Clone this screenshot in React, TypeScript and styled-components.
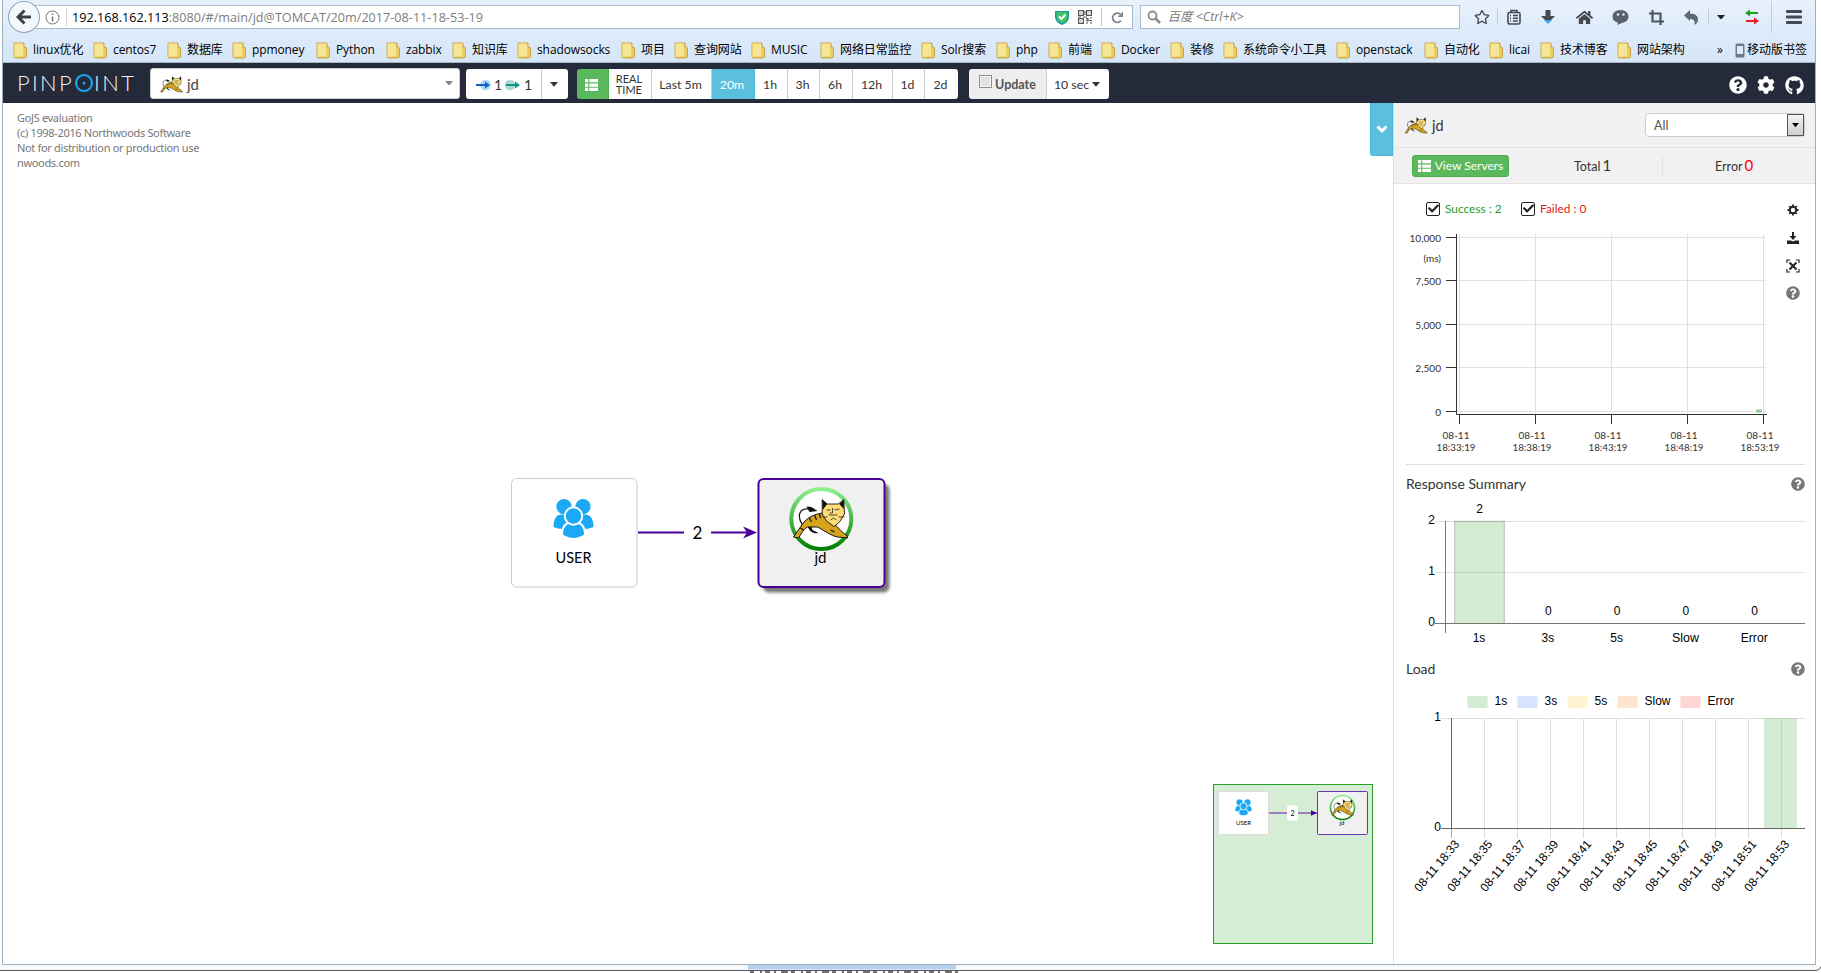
import React from "react";
import styled, { createGlobalStyle, css } from "styled-components";
import { FaQuestionCircle, FaCog, FaGithub, FaHome, FaRegStar, FaCheck } from "react-icons/fa";

const ui = `"Open Sans", "Noto Sans", "Noto Sans CJK SC", sans-serif`;
const lato = `Lato, "Liberation Sans", sans-serif`;
const arial = `"Liberation Sans", Arial, sans-serif`;

const Global = createGlobalStyle`
  * { box-sizing: border-box; }
  body { margin: 0; background: #fff; font-family: ${lato}; overflow: hidden; }
  svg { display: block; flex: none; }
`;

const Desktop = styled.div`
  width: 1821px; height: 973px; padding-left: 2px; background: #fff; overflow: hidden;
  display: flex; flex-direction: column;
`;
const Frame = styled.div`
  width: 1814px; height: 965px; display: flex; flex-direction: column; flex: none;
  border: solid #9eb0be; border-width: 0 1px 1px 1px;
`;
const Chrome = styled.header`
  height: 63px; flex: none; border-bottom: 1px solid #a3b6c8;
  background: linear-gradient(#e8f2fc, #dceafa 55%, #d7e7f7);
`;
const AddressRow = styled.div`height: 34px; display: flex; align-items: center;`;
const BackButton = styled.div`
  width: 32px; height: 32px; margin-left: 5px; border-radius: 50%; border: 1px solid #8fa4b9; background: #f3f8fd;
  display: flex; align-items: center; justify-content: center; z-index: 1;
`;
const Field = styled.div<{ $w: number }>`
  width: ${p => p.$w}px; height: 24px; border: 1px solid #a8b9cb; background: #fff; display: flex; align-items: center;
  font: 12.65px/22px ${ui}; color: #7d7d7d;
`;
const UrlField = styled(Field)`margin-left: -6px; padding-left: 10px;`;
const UrlText = styled.span`padding: 0 0 0 5px; white-space: nowrap; b { font-weight: 400; color: #000; }`;
const SearchField = styled(Field)`margin-left: 7px; padding-left: 6px; gap: 6px; font-style: italic; font-size: 12.5px;`;
const Sep = styled.i<{ $h?: number }>`width: 1px; height: ${p => p.$h ?? 16}px; background: #c2cbd6; flex: none;`;
const FieldSep = styled(Sep)`background: #d5d5d5; margin-left: 6px;`;
const Tool = styled.span<{ $w: number }>`width: ${p => p.$w}px; display: flex; justify-content: center; color: #454a50;`;
const UrlIcons = styled.div`margin-left: auto; display: flex; align-items: center; gap: 9px; padding-right: 8px; flex: none;`;
const Tools = styled.div`display: flex; align-items: center; margin-left: 6px;`;
const Bookmarks = styled.div`height: 28px; display: flex; align-items: center; padding: 4px 0 0 10px; font: 12px/20px ${ui}; color: #000;`;
const Bookmark = styled.div<{ $w: number }>`
  width: ${p => p.$w}px; flex: none; display: flex; gap: 6px; align-items: center; white-space: nowrap; letter-spacing: -0.1px;
`;
const Mobile = styled.div`display: flex; gap: 2px; align-items: center; white-space: nowrap;`;

const NavBar = styled.nav`height: 40px; flex: none; background: #242a3a; display: flex; align-items: center; color: #fff;`;
const Logo = styled.div`
  width: 147px; padding-left: 14px; display: flex; align-items: center; font: 300 22px/40px ${lato}; color: #f2f3f5; white-space: nowrap;
`;
const LogoPart = styled.span<{ $w: number; $ls: number }>`
  width: ${p => p.$w}px; letter-spacing: ${p => p.$ls}px; display: block; flex: none;
`;
const AppSelect = styled.div`
  width: 310px; height: 31px; border-radius: 3px; background: #fff; border: 1px solid #ccc; display: flex; align-items: center;
  padding: 1px 6px 0 9px; gap: 4px; font-size: 15px; color: #444; margin: 1px 6px 0 0;
  svg:last-child { margin: -2px 0 0 auto; }
`;
const Group = styled.div<{ $gap: number }>`height: 30px; display: flex; margin: 1px ${p => p.$gap}px 0 0; border-radius: 3px; overflow: hidden;`;
const Cell = styled.div<{ $w: number; $tone?: "green" | "blue" | "gray" }>`
  width: ${p => p.$w}px; height: 30px; background: #fff; color: #333; border-right: 1px solid #ccc; font-size: 12.3px; line-height: 12px;
  display: flex; align-items: center; justify-content: center; white-space: nowrap; gap: 3px; padding: 2px 2px 0 0;
  &:last-child { border-right: 0; }
  ${p => p.$tone === "green" && css`background: #5cb85c; border-color: #4cae4c;`}
  ${p => p.$tone === "blue" && css`background: #5bc0de; border-color: #46b8da; color: #fff;`}
  ${p => p.$tone === "gray" && css`background: #eee; color: #555; font-weight: 700; font-size: 12.5px; padding-right: 0;`}
`;
const FlowCell = styled(Cell)`font-size: 14px; padding-right: 0;`;
const RealTime = styled(Cell)`font-size: 11px; line-height: 11px; padding: 0 2px 0 0;`;
const NativeCheck = styled.i`width: 13px; height: 13px; border: 1px solid #8e8f8f; background: #dfe1e3; box-shadow: inset 0 0 0 1px #f6f6f6; margin-top: -6px;`;
const NavIcons = styled.div`margin-left: auto; display: flex; align-items: center; gap: 10px; padding: 4px 11px 0 0;`;

const Body = styled.main`flex: 1; display: flex; min-height: 0; background: #fff;`;
const Canvas = styled.section`width: 1390px; position: relative; overflow: hidden;`;
const Notice = styled.p`margin: 7px 0 0 14px; font: 11px/15px "Noto Sans", sans-serif; color: #777; letter-spacing: -0.33px;`;
const Layer = styled.svg`position: absolute; left: 0; top: 0;`;
const Toggle = styled.button`
  position: absolute; right: 0; top: 0; width: 23px; height: 53px; border: 1px solid #46b8da; border-top: 0; background: #5bc0de;
  border-radius: 0 0 0 3px; display: flex; align-items: center; justify-content: center; padding: 0;
`;
const Side = styled.aside`width: 422px; border-left: 1px solid #ddd; color: #333; display: flex; flex-direction: column;`;
const SideHead = styled.div`height: 45px; background: #f1f1f1; border-bottom: 1px solid #e3e3e3; display: flex; align-items: center; padding: 0 10px 0 10px; gap: 4px; font-size: 14.500px;`;
const Select = styled.div`
  margin: 0 0 0 auto; width: 160px; height: 24px; background: #fff; border: 1px solid #ccc; border-radius: 4px; display: flex; align-items: center;
  justify-content: space-between; font-size: 12.5px; padding-left: 8px; color: #555;
`;
const SelectArrow = styled.i`width: 17px; height: 22px; border: 1px solid #555; background: linear-gradient(#f3f3f3, #cfcfcf); display: flex; align-items: center; justify-content: center;`;
const Stats = styled.div`height: 36px; background: #f1f1f1; border-bottom: 1px solid #e3e3e3; display: flex; align-items: center; padding-left: 18px; font-size: 12.5px;`;
const ViewServers = styled.button`
  width: 97px; height: 22px; padding: 0; border: 1px solid #4cae4c; border-radius: 3px; background: #5cb85c; color: #fff; font: 12px ${lato};
  display: flex; align-items: center; justify-content: center; gap: 4px; white-space: nowrap; margin-right: 65px;
`;
const Stat = styled.div<{ $w: number; $red?: boolean }>`
  width: ${p => p.$w}px; display: flex; align-items: baseline; gap: 2px;
  b { font-weight: 400; font-size: 15px; line-height: 16px; color: ${p => (p.$red ? "#f00" : "#333")}; }
`;
const StatSep = styled.i`width: 1px; height: 20px; background: #e2e2e2; margin-right: 52px;`;
const Scatter = styled.div`height: 280px; display: flex;`;
const Legend = styled.div`height: 15px; display: flex; margin: 17px 0 0 32px; font-size: 11.9px; line-height: 15px;`;
const Check = styled.label<{ $c: string; $w: number }>`width: ${p => p.$w}px; display: flex; align-items: center; gap: 5px; color: ${p => p.$c}; white-space: nowrap;`;
const Box = styled.i`width: 14px; height: 14px; border: 1px solid #222; border-radius: 2px; color: #222; display: flex; align-items: center; justify-content: center;`;
const ScatterMain = styled.div`width: 388px; > svg { margin-top: 12px; }`;
const Actions = styled.div`width: 22px; display: flex; flex-direction: column; align-items: center; gap: 14px; padding-top: 19px; color: #222; svg:last-child { margin-top: -1px; }`;
const Section = styled.section`margin: 0 10px 0 12px; &:first-of-type { border-top: 1px solid #ddd; }`;
const Title = styled.h3`
  margin: 0; height: 36px; display: flex; align-items: center; justify-content: space-between; font: 400 14px/20px ${lato}; padding-top: 2px; color: #333;
  svg { color: #777; }
`;
const LoadTitle = styled(Title)`padding: 0;`;

const BottomEdge = styled.footer`height: 8px; flex: none; background: #fff; margin-left: -2px;`;

const Cat = ({ x, y, w, h }: { x?: number; y?: number; w: number; h: number }) => (
  <svg x={x} y={y} width={w} height={h} viewBox="3 11 56 42">
    <path d="M13 38C7 29 10 21 19 22" fill="none" stroke="#111" strokeWidth="1.2" />
    <path d="M17 19.500l5 .5 6 4-8 1z" fill="#111" />
    <path d="M18 39c2 6 6 8 11 7l-6-3-2-6z" fill="#111" />
    <path d="M33 26c-8 1-16 5-20 11l-9 13 5 1c4-6 5-9 9-11l10 0c6 3 14 9 20 10l10 1-1-3c-6-3-8-9-15-12z" fill="#d6a41c" stroke="#111" strokeWidth="1" />
    <path d="M20 31l2 4M25 28l2 5M30 27l1 4M41 43l4 2M11 41l3 2" stroke="#111" strokeWidth="1.2" />
    <path d="M32.700 12.700l5 4.300h11l5.600-4.300L55 27l-5 8-5.500 4.500-7.500-5.500-4.300-7z" fill="#fddc76" stroke="#111" strokeWidth=".9" />
    <path d="M32.700 12.700l5 4.300-4.500 6zM54.300 12.700l-4.500 4.300 4.500 5z" fill="#111" />
    <path d="M37 23h4M45 23l5-1M43 21v5h-3M39 28h9M41 33l3-2 3 2M33 30h5M49 30h6" stroke="#222" strokeWidth=".8" fill="none" />
  </svg>
);
const Users = ({ x, y, w, bg = "#fff" }: { x: number; y: number; w: number; bg?: string }) => (
  <svg x={x} y={y} width={w} height={w} viewBox="-.5 -.5 41 41">
    <g fill="#1ba9f5">
      <circle cx="10.5" cy="7.6" r="7.6" /><circle cx="29.5" cy="7.6" r="7.6" />
      <path d="M0 28q0-13 9-12.500q9 0 9 12.500q-9 4-18 0zM22 28q0-13 9-12.500q9 0 9 12.500q-9 4-18 0z" />
      <path d="M8.500 36q0-13 11.500-13t11.500 13q-11.500 8-23 0z" stroke={bg} strokeWidth="2" />
      <circle cx="20" cy="17" r="8.700" stroke={bg} strokeWidth="2" />
    </g>
  </svg>
);
const Folder = () => (
  <svg width="14" height="17" viewBox="0 0 14 17">
    <path d="M1 1h10v4h1.500l1 1v9l-2 1H2l-1-1z" fill="#ebcd62" stroke="#c39d38" strokeWidth=".9" />
    <path d="M1.500 1.500h8.500v12.500l-8.500 1z" fill="#f7e596" />
  </svg>
);
const Caret = ({ w = 8, c = "#333" }: { w?: number; c?: string }) => (
  <svg width={w} height={w * 0.6} viewBox="0 0 10 6"><path d="M0 0h10L5 6z" fill={c} /></svg>
);
const ThList = ({ w }: { w: number }) => (
  <svg width={w} height={w - 1} viewBox="0 0 12 11" fill="#fff">
    <path d="M0 0h3v3H0zM4 0h8v3H4zM0 4h3v3H0zM4 4h8v3H4zM0 8h3v3H0zM4 8h8v3H4z" />
  </svg>
);
const Flow = ({ c, g, start }: { c: string; g: string; start?: boolean }) => (
  <svg width="16" height="12" viewBox="0 0 16 12">
    <circle cx={start ? 5 : 10.500} cy="6" r="5.300" fill={g} />
    <path d="M1 5h9V2.500L15 6l-5 3.500V7H1z" fill={c} />
  </svg>
);

const bookmarks: [string, number][] = [
  ["linux优化", 80], ["centos7", 74], ["数据库", 65], ["ppmoney", 84], ["Python", 70], ["zabbix", 66], ["知识库", 65],
  ["shadowsocks", 104], ["项目", 53], ["查询网站", 77], ["MUSIC", 69], ["网络日常监控", 101], ["Solr搜索", 75], ["php", 52],
  ["前端", 53], ["Docker", 69], ["装修", 53], ["系统命令小工具", 113], ["openstack", 88], ["自动化", 65], ["licai", 51],
  ["技术博客", 77], ["网站架构", 100],
];
const ranges: [string, number][] = [["1h", 33], ["3h", 32], ["6h", 33], ["12h", 40], ["1d", 32], ["2d", 33]];

const T = ({ x, y, children, s = 12, f = arial, a = "middle", w, c = "#000" }: { x: number; y: number; children: React.ReactNode; s?: number; f?: string; a?: "start" | "middle" | "end"; w?: number; c?: string }) => (
  <text x={x} y={y} fontSize={s} fontFamily={f} textAnchor={a} fill={c} textLength={w} lengthAdjust="spacingAndGlyphs">{children}</text>
);

const Browser = () => (
  <Chrome>
    <AddressRow>
      <BackButton>
        <svg width="16" height="16" viewBox="0 0 16 16"><path d="M8.500 1.500L2 8l6.500 6.500M2.500 8H15" stroke="#3c4148" strokeWidth="3" fill="none" /></svg>
      </BackButton>
      <UrlField $w={1101}>
        <svg width="15" height="15" viewBox="0 0 15 15" fill="none" stroke="#777"><circle cx="7.500" cy="7.500" r="6.500" /><path d="M7.500 6.500v5M7.500 3.500v1.600" strokeWidth="1.500" /></svg>
        <FieldSep $h={17} />
        <UrlText><b>192.168.162.113</b>:8080/#/main/jd@TOMCAT/20m/2017-08-11-18-53-19</UrlText>
        <UrlIcons>
          <svg width="14" height="15" viewBox="0 0 14 15"><path d="M0 1h14v6q0 5-7 8Q0 12 0 7z" fill="#1898a8" /><path d="M1.500 2h11v5q0 4-5.500 6.500Q1.500 11 1.500 7z" fill="#43c463" /><path d="M4 6.500l2.500 2.500L10.500 4.500" stroke="#fff" strokeWidth="2" fill="none" /></svg>
          <svg width="14" height="14" viewBox="0 0 14 14" fill="none" stroke="#555" strokeWidth="1.200"><path d="M.6.6h4.800v4.800H.6zM8.600.6h4.800v4.800H8.600zM.6 8.600h4.800v4.800H.6z" /><path d="M2.500 3h1M10.500 3h1M2.500 11h1M8 8.600h2v2H8M12 8h2M11 10.500h3M8 13h2M12 13h2M0 7h3M5 7h4M7 1v4" /></svg>
          <Sep $h={18} />
          <svg width="13" height="13" viewBox="0 0 13 13"><path d="M10 9.500A4.600 4.600 0 1 1 9 3" stroke="#7d8894" strokeWidth="2" fill="none" /><path d="M12 .5V6H6.500z" fill="#7d8894" /></svg>
        </UrlIcons>
      </UrlField>
      <SearchField $w={320}>
        <svg width="14" height="14" viewBox="0 0 14 14" fill="none" stroke="#8b8b8b"><circle cx="5.500" cy="5.500" r="4" strokeWidth="1.800" /><path d="M8.500 8.500l4.500 4.500" strokeWidth="2.500" /></svg>
        百度 &lt;Ctrl+K&gt;
      </SearchField>
      <Tools>
        <Tool $w={31}><FaRegStar size={16} /></Tool><Sep />
        <Tool $w={31}><svg width="14" height="16" viewBox="0 0 14 16" fill="none" stroke="#454a50" strokeWidth="1.600"><rect x="1" y="3.500" width="12" height="11.500" rx="1.500" /><path d="M4 3.500V1.500h6v2M3 6.500h1M6 6.500h5M3 9.200h1M6 9.200h5M3 12h1M6 12h5" /></svg></Tool>
        <Tool $w={37}><svg width="14" height="16" viewBox="0 0 14 16"><path d="M4.500 1h5v6H14L7 14 0 7h4.500z" fill="#454a50" /><path d="M3 11h8l-4 4z" fill="#3aa0f0" /></svg></Tool>
        <Tool $w={36}><FaHome size={17} /></Tool>
        <Tool $w={36}><svg width="17" height="15" viewBox="0 0 17 15"><path d="M8.500 0C3.500 0 .5 3 .5 6.500c0 3 2 5.500 5.500 6.200L5 15l5-2.100c4-.6 6.500-3.200 6.500-6.400C16.500 3 13.500 0 8.500 0z" fill="#57616c" /><circle cx="6" cy="4.500" r="1.300" fill="#dceafa" /><circle cx="11.500" cy="4.500" r="1.300" fill="#dceafa" /></svg></Tool>
        <Tool $w={36}><svg width="15" height="15" viewBox="0 0 15 15" fill="none" stroke="#4c5660" strokeWidth="2.200"><path d="M3.500 0v11.500H15M0 3.500h11.500V15" /></svg></Tool>
        <Tool $w={34}><svg width="14" height="15" viewBox="0 0 14 15"><path d="M0 5.500L6 0v3.500c6 0 8 3 8 6 0 2.500-1.500 4.500-3.500 5.500 1-4-1-6-4.500-6V11z" fill="#5d6874" /></svg></Tool><Sep />
        <Tool $w={24}><Caret w={8} c="#222" /></Tool>
        <Tool $w={38}><svg width="14" height="16" viewBox="0 0 14 16"><path d="M0 4l5-3.500V3h8v2H5v2.500z" fill="#15a915" /><path d="M14 12L9 8.500V11H1v2h8v2.500z" fill="#ee1c1c" /></svg></Tool>
        <Sep $h={32} />
        <Tool $w={43}><svg width="16" height="14" viewBox="0 0 16 14"><path d="M1 1.500h14M1 7h14M1 12.500h14" stroke="#454a50" strokeWidth="2.800" strokeLinecap="round" /></svg></Tool>
      </Tools>
    </AddressRow>
    <Bookmarks>
      {bookmarks.map(([n, w]) => <Bookmark key={n} $w={w}><Folder />{n}</Bookmark>)}
      <Bookmark $w={18}>»</Bookmark>
      <Mobile><svg width="10" height="15" viewBox="0 0 10 15"><rect x=".5" y=".5" width="9" height="14" rx="1.500" fill="#6e7883" /><path d="M2 3h6v8H2z" fill="#dceafa" /></svg>移动版书签</Mobile>
    </Bookmarks>
  </Chrome>
);

const Nav = () => (
  <NavBar>
    <Logo>
      <LogoPart $w={57} $ls={2.3}>PINP</LogoPart>
      <svg width="20" height="20" viewBox="0 0 20 20"><circle cx="10" cy="10" r="8" fill="none" stroke="#19a5f0" strokeWidth="2.200" /><circle cx="10" cy="10" r="1.500" fill="#19a5f0" /></svg>
      <LogoPart $w={42} $ls={2.4}>INT</LogoPart>
    </Logo>
    <AppSelect><Cat w={23} h={17} />jd<Caret w={8} c="#888" /></AppSelect>
    <Group $gap={9}>
      <FlowCell $w={76}><Flow c="#1464c0" g="#a9dbf8" />1<Flow c="#0b9a83" g="#a9d9cf" start />1</FlowCell>
      <Cell $w={26}><Caret /></Cell>
    </Group>
    <Group $gap={11}>
      <Cell $w={32} $tone="green"><ThList w={13} /></Cell>
      <RealTime $w={43}>REAL<br />TIME</RealTime>
      <Cell $w={60}>Last 5m</Cell>
      <Cell $w={43} $tone="blue">20m</Cell>
      {ranges.map(([n, w]) => <Cell key={n} $w={w}>{n}</Cell>)}
    </Group>
    <Group $gap={0}>
      <Cell $w={78} $tone="gray"><NativeCheck />Update</Cell>
      <Cell $w={62}>10 sec<Caret /></Cell>
    </Group>
    <NavIcons><FaQuestionCircle size={18} /><FaCog size={18} /><FaGithub size={19} /></NavIcons>
  </NavBar>
);

const Diagram = () => (
  <Layer width="1390" height="861" viewBox="3 103 1390 861">
    <defs>
      <linearGradient id="ring" x1="0" y1="0" x2="0" y2="1"><stop offset="0" stopColor="#90ee90" /><stop offset="1" stopColor="#008000" /></linearGradient>
      <filter id="shade" x="-20%" y="-20%" width="140%" height="140%"><feGaussianBlur stdDeviation="1.500" /></filter>
    </defs>
    <rect x="511.500" y="478.500" width="125.500" height="108.500" rx="5" fill="#fff" stroke="#ccc" />
    <Users x={553} y={498.500} w={41} />
    <T x={573.500} y={562.500} s={15} f={lato} w={36}>USER</T>
    <path d="M638 532.500h46M711 532.500h42" stroke="#4b0099" strokeWidth="2" />
    <path d="M743 526.500l14 6-14 6 4-6z" fill="#4b0099" />
    <T x={697.500} y={539} s={17} f={lato}>2</T>
    <rect x="763" y="484" width="126.500" height="108.500" rx="6" fill="#777" filter="url(#shade)" />
    <rect x="758.500" y="479" width="126" height="108" rx="5" fill="#f0f0f0" stroke="#4b0099" strokeWidth="2" />
    <circle cx="821.300" cy="519" r="30" fill="#fff" stroke="url(#ring)" strokeWidth="4" />
    <Cat x={792.500} y={498} w={56} h={42} />
    <T x={820.500} y={563} s={15} f={lato}>jd</T>

    <rect x="1213.500" y="784.500" width="159" height="159" fill="#d5ecd5" stroke="#28a028" />
    <rect x="1218.500" y="791.500" width="50" height="43" rx="1" fill="#fff" stroke="#ddd" />
    <Users x={1235} y={799} w={17} />
    <T x={1243.500} y={825} s={6} f={lato}>USER</T>
    <path d="M1269 813h48" stroke="#8a5bbd" strokeWidth="1.300" />
    <path d="M1311 810.300l6 2.700-6 2.700z" fill="#4b0099" />
    <rect x="1287" y="805.500" width="11" height="15" rx="2" fill="#fff" />
    <T x={1292.500} y={816} s={7} f={lato}>2</T>
    <rect x="1317.500" y="791.500" width="50" height="43" rx="1" fill="#f0f0f0" stroke="#6a35ae" />
    <circle cx="1342.500" cy="807.500" r="12" fill="#fff" stroke="url(#ring)" strokeWidth="1.700" />
    <Cat x={1331} y={799} w={23} h={17} />
    <T x={1342} y={825} s={6} f={lato}>jd</T>
  </Layer>
);

const scatterX = [1459.5, 1535.5, 1611.5, 1687.5, 1763.5];
const scatterTimes = ["18:33:19", "18:38:19", "18:43:19", "18:48:19", "18:53:19"];
const scatterY: [number, string][] = [[237.5, "10,000"], [280.5, "7,500"], [324.5, "5,000"], [367.5, "2,500"], [411.5, "0"]];

const ScatterPlot = () => (
  <svg width="388" height="230" viewBox="1394 228 388 230">
    {scatterX.map(x => <path key={x} d={`M${x} 234V414`} stroke="#e1e1e1" />)}
    {scatterY.map(([y, l]) => (
      <g key={l}>
        <path d={`M1457 ${y}H1766`} stroke="#e1e1e1" /><path d={`M1446 ${y}h11`} stroke="#333" />
        <T x={1441} y={y + 4.500} s={10.1} a="end" f={lato} c="#333">{l}</T>
      </g>
    ))}
    <T x={1441} y={262} s={10} a="end" f={lato} c="#333">(ms)</T>
    <path d="M1456.500 234V414.500H1767" stroke="#333" fill="none" />
    {scatterX.map((x, i) => (
      <g key={x}>
        <path d={`M${x} 414v10`} stroke="#333" />
        <T x={x - 3.500} y={439} s={10} f={lato} c="#333">08-11</T>
        <T x={x - 3.500} y={451} s={10} f={lato} c="#333" w={39}>{scatterTimes[i]}</T>
      </g>
    ))}
    <rect x="1756" y="409.500" width="6" height="3" rx="1" fill="#8fce8f" />
  </svg>
);

const ResponseChart = () => (
  <svg width="399" height="150" viewBox="1406 501 399 150">
    <path d="M1435 521.500H1805M1435 572.500H1805" stroke="#e0e0e0" />
    <rect x="1454" y="521" width="51" height="102.500" fill="#d4ecd4" />
    <path d="M1454.700 623V521.500H1504.300V623" fill="none" stroke="#c6d0c6" strokeWidth="1.500" />
    <path d="M1454 521.500h51" stroke="#a9bca9" /><path d="M1454 572.500h51" stroke="#bdd3bd" />
    <path d="M1435 623.500H1805M1445.500 521v112" stroke="#777" />
    {["2", "1", "0"].map((v, i) => <T key={v} x={1435} y={524 + 51 * i} a="end">{v}</T>)}
    {["1s", "3s", "5s", "Slow", "Error"].map((l, i) => (
      <g key={l}>
        <T x={1479 + i * 68.800} y={642} w={l === "Slow" || l === "Error" ? 27 : undefined}>{l}</T>
        <T x={1479.500 + i * 68.800} y={i ? 615 : 513}>{i ? "0" : "2"}</T>
      </g>
    ))}
  </svg>
);

const legend: [string, string, number][] = [["1s", "#d4ecd4", 1467.5], ["3s", "#d6e4ff", 1517.5], ["5s", "#fff3d1", 1567.5], ["Slow", "#fde5cf", 1617.5], ["Error", "#ffd5d5", 1680.5]];
const LoadChart = () => (
  <svg width="399" height="220" viewBox="1406 687 399 220">
    {legend.map(([l, c, x]) => (
      <g key={l}><rect x={x} y="696" width="20" height="12" fill={c} /><T x={x + 27} y={705} a="start">{l}</T></g>
    ))}
    {Array.from({ length: 10 }, (_, i) => <path key={i} d={`M${1484.500 + 33 * i} 718V838`} stroke="#ddd" />)}
    <path d="M1441 718.500H1805" stroke="#ddd" />
    <rect x="1764" y="718" width="33" height="110" fill="#d4ecd4" />
    <path d="M1781.500 718v110M1764 718.500h33" stroke="#bcd8bc" />
    <path d="M1441 828.500H1805M1451.500 718V828" stroke="#666" /><path d="M1451.500 829v9" stroke="#aaa" />
    <T x={1441} y={721} a="end">1</T><T x={1441} y={831} a="end">0</T>
    {Array.from({ length: 11 }, (_, i) => (
      <g key={i} transform={`translate(${1460 + 33 * i} 844.5) rotate(-50)`}><T x={0} y={0} a="end" w={62.5}>{`08-11 18:${33 + 2 * i}`}</T></g>
    ))}
  </svg>
);

const Sidebar = () => (
  <Side>
    <SideHead>
      <Cat w={24} h={17} />jd
      <Select>All<SelectArrow><Caret w={7} c="#000" /></SelectArrow></Select>
    </SideHead>
    <Stats>
      <ViewServers><ThList w={13} />View Servers</ViewServers>
      <Stat $w={88}>Total <b>1</b></Stat><StatSep />
      <Stat $w={60} $red>Error <b>0</b></Stat>
    </Stats>
    <Scatter>
      <ScatterMain>
        <Legend>
          <Check $c="#1f9a2c" $w={95}><Box><FaCheck size={11} /></Box>Success : 2</Check>
          <Check $c="#dd1c1c" $w={90}><Box><FaCheck size={11} /></Box>Failed : 0</Check>
        </Legend>
        <ScatterPlot />
      </ScatterMain>
      <Actions>
        <svg width="14" height="14" viewBox="0 0 14 14" fill="none" stroke="#222"><circle cx="7" cy="7" r="3.200" strokeWidth="2" /><path d="M7 1.500v2M7 10.500v2M1.500 7h2M10.500 7h2M3.200 3.200l1 1M9.800 9.800l1 1M10.800 3.200l-1 1M4.200 9.800l-1 1" strokeWidth="1.800" /></svg>
        <svg width="12" height="14" viewBox="0 0 12 14" fill="#222"><path d="M5 1h2v4h2.500L6 9 2.500 5H5zM0 9.500h4l2 1 2-1h4V13H0z" /></svg>
        <svg width="14" height="14" viewBox="0 0 14 14" fill="none" stroke="#222"><path d="M1 4V1h3M10 1h3v3M13 10v3h-3M4 13H1v-3" strokeWidth="1.200" /><path d="M3.500 3.500l7 7M10.500 3.500l-7 7" strokeWidth="2" /></svg>
        <FaQuestionCircle size={14} color="#777" />
      </Actions>
    </Scatter>
    <Section><Title>Response Summary<FaQuestionCircle size={14} /></Title><ResponseChart /></Section>
    <Section><LoadTitle>Load<FaQuestionCircle size={14} /></LoadTitle><LoadChart /></Section>
  </Side>
);

export default function App() {
  return (
    <>
      <Global />
      <Desktop>
        <Frame>
          <Browser />
          <Nav />
          <Body>
            <Canvas>
              <Diagram />
              <Notice>GoJS evaluation<br />(c) 1998-2016 Northwoods Software<br />Not for distribution or production use<br />nwoods.com</Notice>
              <Toggle>
                <svg width="12" height="9" viewBox="0 0 12 9"><path d="M1.500 1.500L6 6l4.500-4.500" stroke="#fff" strokeWidth="3" fill="none" /></svg>
              </Toggle>
            </Canvas>
            <Sidebar />
          </Body>
        </Frame>
        <BottomEdge>
          <svg width="1821" height="8" viewBox="0 965 1821 8">
            <path d="M0 965h1819v5H0z" fill="#f7f8fa" />
            <path d="M748 965h208v4.500H748z" fill="#b5d1ee" />
            <path d="M0 970.500H1816q4 0 5-4" stroke="#55585e" fill="none" />
            <path d="M750 972h208" stroke="#444" strokeWidth="1.500" strokeDasharray="4 6 2 3 5 4 2 5 7 3" />
          </svg>
        </BottomEdge>
      </Desktop>
    </>
  );
}
